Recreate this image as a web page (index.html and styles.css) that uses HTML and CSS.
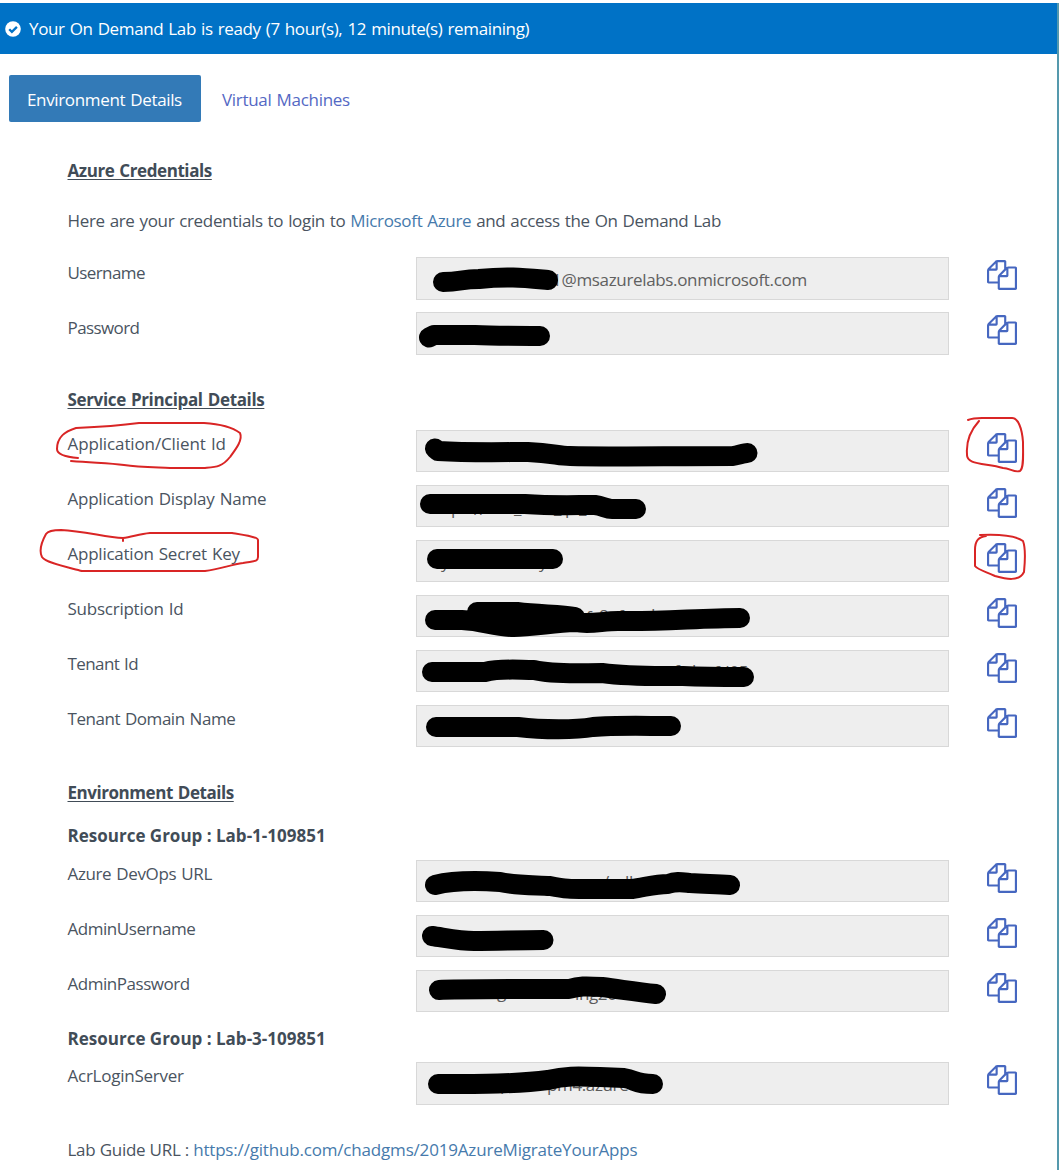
FILE: index.html
```html
<!DOCTYPE html>
<html lang="en">
<head>
<meta charset="utf-8">
<title>On Demand Lab</title>
<link rel="stylesheet" href="styles.css">
</head>
<body>
<svg class="defs" width="0" height="0" aria-hidden="true">
  <symbol id="copy" viewBox="0 0 1792 1792"><path d="M1696 384q40 0 68 28t28 68v1216q0 40-28 68t-68 28h-960q-40 0-68-28t-28-68v-288h-544q-40 0-68-28t-28-68v-672q0-40 20-88t48-76l408-408q28-28 76-48t88-20h416q40 0 68 28t28 68v328q68-40 128-40h416zm-544 213l-299 299h299v-299zm-640-384l-299 299h299v-299zm196 647l316-316v-416h-384v416q0 40-28 68t-68 28h-416v640h512v-256q0-40 20-88t48-76zm956 804v-1152h-384v416q0 40-28 68t-68 28h-416v640h896z"/></symbol>
</svg>
<div class="panel">
  <header class="banner">
    <svg class="check" viewBox="0 0 16 16"><circle cx="8" cy="8" r="7.8" fill="#fff"/><path d="M4.2 8.2l2.7 2.7 5-5" fill="none" stroke="#0072c6" stroke-width="2.3"/></svg>
    <span class="banner-text">Your On Demand Lab is ready (7 hour(s), 12 minute(s) remaining)</span>
  </header>
  <nav class="tabs">
    <a class="tab active"><span>Environment Details</span></a>
    <a class="tab"><span>Virtual Machines</span></a>
  </nav>
  <main class="content">
    <h2 class="title">Azure Credentials</h2>
    <p class="intro">Here are your credentials to login to <a>Microsoft Azure</a> and access the On Demand Lab</p>
    <section class="rows tall">
      <div class="row"><label class="tight">Username</label><div class="field"><span class="value">@msazurelabs.onmicrosoft.com</span></div><svg class="copy"><use href="#copy"/></svg></div>
      <div class="row"><label class="tight">Password</label><div class="field"></div><svg class="copy"><use href="#copy"/></svg></div>
    </section>
    <h2 class="title service">Service Principal Details</h2>
    <section class="rows">
      <div class="row"><label class="widest">Application/Client Id</label><div class="field"></div><svg class="copy"><use href="#copy"/></svg></div>
      <div class="row"><label class="wide">Application Display Name</label><div class="field"></div><svg class="copy"><use href="#copy"/></svg></div>
      <div class="row"><label class="wide">Application Secret Key</label><div class="field"></div><svg class="copy"><use href="#copy"/></svg></div>
      <div class="row"><label class="wide">Subscription Id</label><div class="field"></div><svg class="copy"><use href="#copy"/></svg></div>
      <div class="row"><label class="tight">Tenant Id</label><div class="field"></div><svg class="copy"><use href="#copy"/></svg></div>
      <div class="row"><label class="snug">Tenant Domain Name</label><div class="field"></div><svg class="copy"><use href="#copy"/></svg></div>
    </section>
    <h2 class="title environment">Environment Details</h2>
    <h3 class="group">Resource Group : Lab-1-109851</h3>
    <section class="rows">
      <div class="row"><label>Azure DevOps URL</label><div class="field"></div><svg class="copy"><use href="#copy"/></svg></div>
      <div class="row"><label class="snug">AdminUsername</label><div class="field"></div><svg class="copy"><use href="#copy"/></svg></div>
      <div class="row"><label class="snug">AdminPassword</label><div class="field"></div><svg class="copy"><use href="#copy"/></svg></div>
    </section>
    <h3 class="group second">Resource Group : Lab-3-109851</h3>
    <section class="rows last">
      <div class="row"><label class="wide">AcrLoginServer</label><div class="field"></div><svg class="copy"><use href="#copy"/></svg></div>
    </section>
    <p class="guide">Lab Guide URL : <a>https://github.com/chadgms/2019AzureMigrateYourApps</a></p>
  </main>
</div>
<svg class="markup" width="1063" height="1170" viewBox="0 0 1063 1170">
  <!-- ends of values that show past the redaction strokes -->
  <g class="fragments">
    <text x="552" y="286">1</text>
    <text x="451" y="514">p</text><text x="474" y="515">//</text><text x="514" y="514">_</text><text x="554" y="514">_</text><text x="565" y="514">p</text><text x="579" y="514">_</text>
    <text x="441" y="568">y</text><text x="539" y="568">y</text>
    <text x="586" y="623">f</text><text x="599" y="622">8</text><text x="618" y="622">f</text><text x="645" y="621">d</text>
    <text x="674" y="677">f</text><text x="692" y="677">b</text><text x="714" y="678">fd05</text>
    <text x="603" y="888">/</text><text x="615" y="888">ull</text>
    <text x="497" y="998">g</text><text x="575" y="999.500">ing20</text>
    <text x="467" y="1090">y</text><text x="500" y="1090">p</text><text x="547" y="1091">pm4.azure</text>
  </g>
  <g class="redactions">
    <path d="M443 282C461 282 461 279 479 279C508 276 525 278 548 280"/>
    <path d="M429 337.500L434 335H475C495 336 520 336 540 336"/>
    <path d="M435 448.500L438 451C472 453 505 452 528 452C553 453 558 456 570 456C605 457 665 456 733 456C739 455 744 453 747.500 453"/>
    <path d="M430 504H525C555 506 574 505 595 505C603 506 606 509 612 509H636"/>
    <path d="M437 559H553"/>
    <path d="M435 620H462C484 621 494 627 514 627C531 627 553 623 575 622C590 625 602 621 618 621C660 622 700 618 740 618M477 612H517C540 615 560 614 575 617M480 618H570"/>
    <path d="M432 672H485C501 668 518 670 534 670C555 675 582 673 602 673C632 677 660 676 683 676C705 677 725 677 744 677"/>
    <path d="M436 727H518C543 730 576 730 593 727C616 725 645 726 671 726"/>
    <path d="M435 885C455 880 485 881 500 882C518 886 537 885 550 886C566 889 570 889 585 889H632C646 887 655 884 668 884C676 881 681 882 690 883C706 884 716 884 730 885"/>
    <path d="M432 936C446 938 460 941 474 941C499 941 517 940 543.500 940"/>
    <path d="M439 990C455 989 525 989 569 989C579 986 585 986 602 987C625 990 638 992 656 994"/>
    <path d="M438 1084C480 1084 519 1084 548 1080C565 1076 575 1076 600 1077L624 1078C636 1080 635 1084 653 1084"/>
  </g>
  <g class="circles">
    <path d="M78 458C66 457 57 455 57 449C57 436 66 431 76 428C98 427 116 426 139 423H204C220 424 232 427 240 433C243 440 236 449 230 457C222 467 216 467 205 468H170C145 467 137 467 124 465C110 463 96 463 71 461"/>
    <path d="M123 541V538C105 537 84 531 61 530C52 530 48 531 46 534C41 543 39 551 42 557C46 563 67 567 82 571H205C220 569 230 565 243 563C253 561 258 562 258 557V540C258 537 244 535 232 533H150C139 534 132 537 123 538"/>
    <path d="M979 421C970 431 966 441 967 454C966 465 984 463 1003 468C1010 468 1014 473 1020 471C1024 468 1023 456 1023 442C1022 428 1018 418 1012 418H982Q973 418 968 420"/>
    <path d="M980 535C1000 534 1016 536 1023 541C1026 549 1025 562 1024 572C1019 582 1006 579 995 576C987 572 978 570 975 566V550C975 540 979 537 986 536"/>
  </g>
</svg>
</body>
</html>
```
FILE: styles.css
```css
* { box-sizing: border-box; }

body {
  margin: 0;
  padding-top: 3px;
  height: 1170px;
  overflow: hidden;
  background: #fff;
  color: #4a545f;
  font: 17px/24px "Open Sans", "Noto Sans", sans-serif;
  letter-spacing: -0.37px;
  word-spacing: 1px;
}

.defs { position: absolute; }

.panel {
  width: 1059px;
  height: 1167px;
  border-right: 2px solid #5599ad;
}

.banner {
  display: flex;
  align-items: center;
  gap: 8px;
  height: 51px;
  padding-left: 5px;
  background: #0072c6;
  color: #fff;
}

.check { width: 16px; height: 16px; }

.tabs {
  display: flex;
  margin: 21px 0 0 9px;
}

.tab {
  display: flex;
  align-items: center;
  height: 47px;
  padding: 2px 21px 0;
  color: #5468c4;
  letter-spacing: -0.3px;
}

.tab.active {
  width: 192px;
  padding: 2px 0 0 18px;
  border-radius: 2px;
  background: #337ab7;
  color: #fff;
  letter-spacing: -0.35px;
}

.content { padding: 37px 0 0 67.5px; }

h2, h3, p { margin: 0; font-size: 17px; }

.title {
  color: #414c57;
  text-decoration: underline;
  text-underline-offset: 2px;
  font-weight: 700;
  letter-spacing: -0.42px;
}

.intro { margin: 26px 0 24px; letter-spacing: -0.33px; word-spacing: 0.8px; }

a { color: #467aac; }

.rows { display: grid; row-gap: 13px; }
.tall { row-gap: 12px; }

.row {
  display: grid;
  grid-template-columns: 348.5px 533px 30px;
  height: 42px;
}
.tall .row, .last .row { height: 43px; }

label { padding-top: 2px; }
.tall label { padding-top: 4px; }
label.widest { letter-spacing: -0.12px; }
label.wide { letter-spacing: -0.24px; }
label.snug { letter-spacing: -0.46px; }
label.tight { letter-spacing: -0.6px; }

.field {
  display: flex;
  align-items: center;
  border: 1px solid #d8d8d8;
  background: #eee;
  color: #606060;
}

.value { margin-left: 144.5px; padding-top: 2px; letter-spacing: -0.34px; }

.copy {
  width: 30px;
  height: 30px;
  margin: 3px 0 0 38px;
  fill: #4667c0;
}

.service { margin: 33px 0 18px; letter-spacing: -0.35px; }
.environment { margin: 34px 0 19px; letter-spacing: -0.45px; }
.group { margin-bottom: 12px; color: #414c57; letter-spacing: 0; word-spacing: 0; }
.second { margin: 15px 0 11px; }
.guide { margin-top: 33px; letter-spacing: -0.25px; word-spacing: 0; }
.guide a { letter-spacing: -0.18px; }

/* hand-drawn strokes lying over the page */
.markup { position: absolute; top: 0; left: 0; }
.fragments { fill: #5a5a5a; }
.redactions { fill: none; stroke: #000; stroke-width: 20; stroke-linecap: round; stroke-linejoin: round; }
.circles { fill: none; stroke: #d92525; stroke-width: 2; stroke-linecap: round; stroke-linejoin: round; }
```
